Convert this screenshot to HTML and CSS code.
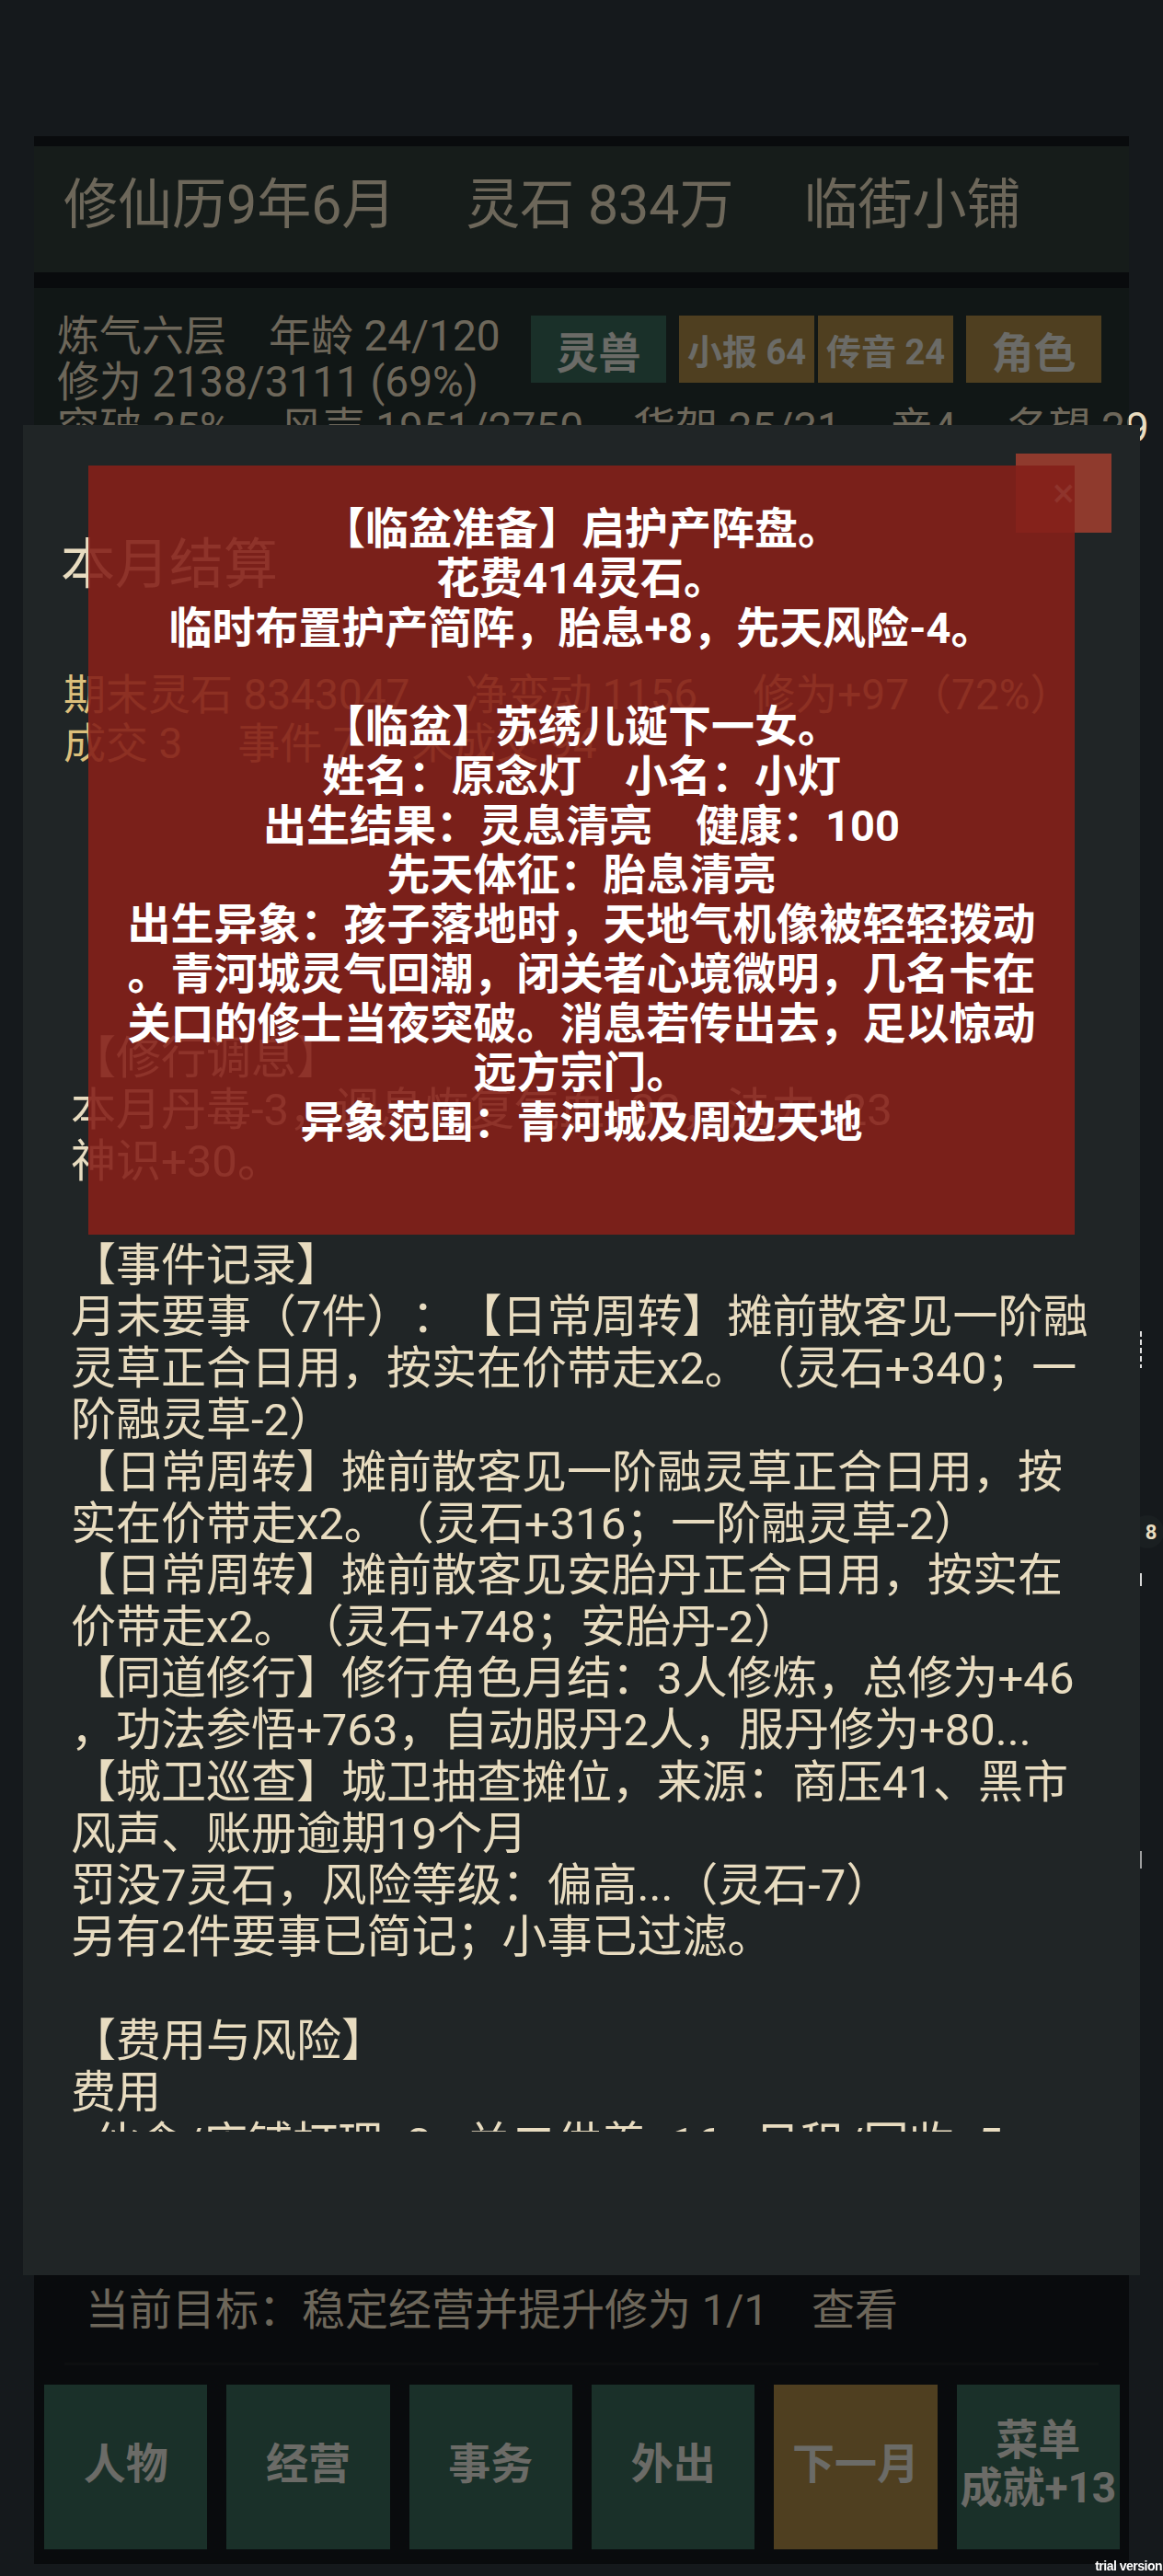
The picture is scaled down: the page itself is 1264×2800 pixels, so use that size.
FILE: index.html
```html
<!DOCTYPE html>
<html lang="zh-CN">
<head>
  <meta charset="UTF-8" />
  <meta name="viewport" content="width=device-width, initial-scale=1.0" />
  <title>修仙小铺 · 本月结算</title>
  <link rel="stylesheet" href="styles.css">
</head>
<body>
  <div class="app">
    <!-- Top bar -->
    <header class="topbar">
      <span>修仙历9年6月</span>
      <span>灵石 834万</span>
      <span>临街小铺</span>
    </header>

    <!-- Character status -->
    <section class="status">
      <div class="status-row">
        <div class="status-main">
          <div>炼气六层　年龄 24/120</div>
          <div>修为 2138/3111 (69%)</div>
        </div>
        <div class="status-btns">
          <button class="btn green">灵兽</button>
          <div class="btn-pair">
            <button class="btn gold small">小报 64</button>
            <button class="btn gold small">传音 24</button>
          </div>
          <button class="btn gold">角色</button>
        </div>
      </div>
      <div class="status-line">
        <span>突破 35%</span><span>风声 1951/2750</span><span>货架 25/31</span><span>亲4</span><span>名望 29</span>
      </div>
    </section>

    <div class="goal">
      <div class="goal-inner">当前目标：稳定经营并提升修为 1/1　查看</div>
    </div>

    <nav class="tabs">
      <button class="tab">人物</button>
      <button class="tab">经营</button>
      <button class="tab">事务</button>
      <button class="tab">外出</button>
      <button class="tab gold">下一月</button>
      <button class="tab">菜单<br>成就+13</button>
    </nav>

    <span class="side-badge">8</span>
    <div class="rail"><i class="r1"></i><i class="r2"></i><i class="r3"></i></div>
    <div class="backdrop"></div>

    <!-- Monthly report dialog -->
    <div class="modal">
      <button class="modal-close" aria-label="关闭">×</button>
      <h2 class="modal-title">本月结算</h2>
      <div class="modal-body">
        <div class="summary">
          <p><span>期末灵石 8343047</span><span>净变动 1156</span><span>修为+97（72%）</span></p>
          <p><span>成交 3</span><span>事件 7</span><span>未成交 94</span></p>
        </div>
        <div class="log">
          <p>【修行调息】</p>
          <p>本月丹毒-3，调息恢复气血+32，法力+23</p>
          <p>神识+30。</p>
          <p>　</p>
          <p>【事件记录】</p>
          <p>月末要事（7件）：【日常周转】摊前散客见一阶融</p>
          <p>灵草正合日用，按实在价带走x2。（灵石+340；一</p>
          <p>阶融灵草-2）</p>
          <p>【日常周转】摊前散客见一阶融灵草正合日用，按</p>
          <p>实在价带走x2。（灵石+316；一阶融灵草-2）</p>
          <p>【日常周转】摊前散客见安胎丹正合日用，按实在</p>
          <p>价带走x2。（灵石+748；安胎丹-2）</p>
          <p>【同道修行】修行角色月结：3人修炼，总修为+46</p>
          <p>，功法参悟+763，自动服丹2人，服丹修为+80...</p>
          <p>【城卫巡查】城卫抽查摊位，来源：商压41、黑市</p>
          <p>风声、账册逾期19个月</p>
          <p>罚没7灵石，风险等级：偏高...（灵石-7）</p>
          <p>另有2件要事已简记；小事已过滤。</p>
          <p>　</p>
          <p>【费用与风险】</p>
          <p>费用</p>
          <p>· 伙食/店铺打理 -3 · 关二供养 -16 · 日租/回收 -5</p>
        </div>
      </div>

      <!-- Birth event toast -->
      <div class="toast">
        <p>【临盆准备】启护产阵盘。</p>
        <p>花费414灵石。</p>
        <p>临时布置护产简阵，胎息+8，先天风险-4。</p>
        <p>　</p>
        <p>【临盆】苏绣儿诞下一女。</p>
        <p>姓名：原念灯　小名：小灯</p>
        <p>出生结果：灵息清亮　健康：100</p>
        <p>先天体征：胎息清亮</p>
        <p>出生异象：孩子落地时，天地气机像被轻轻拨动</p>
        <p>。青河城灵气回潮，闭关者心境微明，几名卡在</p>
        <p>关口的修士当夜突破。消息若传出去，足以惊动</p>
        <p>远方宗门。</p>
        <p>异象范围：青河城及周边天地</p>
      </div>
    </div>
  </div>

  <div class="watermark">trial version</div>
</body>
</html>
```

FILE: styles.css
```css
:root{
  --bg:#15191c;
  --cream:#e8dcc0;
  --gold-text:#dcbf7b;
  --btn-green:#396657;
  --btn-gold:#a88644;
}
*{box-sizing:border-box;margin:0;padding:0}
html,body{overflow-x:hidden}
body{
  background:var(--bg);
  color:var(--cream);
  font-family:Roboto,"Noto Sans CJK SC",sans-serif;
  text-spacing-trim:space-all;
  padding:148px 0 0 37px;
  min-height:2800px;
}
button{font-family:inherit;border:none;color:inherit}

/* ── App frame ─────────────────────────────── */
.app{
  position:relative;
  width:1190px;
  height:2639px;
  padding-top:11px;
  display:flex;
  flex-direction:column;
}

.topbar{
  height:137px;
  flex-shrink:0;
  background:#2f3c39;
  display:flex;
  align-items:center;
  gap:76px;
  padding:0 0 11px 32px;
  font-size:59px;
  line-height:1;
  white-space:nowrap;
}

/* ── Status panel ──────────────────────────── */
.status{
  flex:1;
  margin-top:17px;
  background:#26312f;
  padding:27px 30px 0 25px;
  font-size:46px;
  line-height:50px;
}
.status-row{display:flex;justify-content:space-between;align-items:flex-start}
.status-main{white-space:nowrap}
.status-main div,.status-line{height:50px}
.status-btns{display:flex;gap:14px;margin-top:3px}
.btn-pair{display:flex;gap:4px}
.btn{
  width:147px;height:73px;
  font-size:46px;font-weight:700;
  color:#e4e3dc;
  display:flex;align-items:center;justify-content:center;
  white-space:nowrap;
}
.btn.small{font-size:38px}
.btn.green{background:var(--btn-green)}
.btn.gold{background:var(--btn-gold)}
.status-line{display:flex;gap:54px;white-space:nowrap}

/* ── Goal + tabs ───────────────────────────── */
.goal{height:120px;flex-shrink:0}
.goal-inner{
  height:116px;
  margin:0 33px;
  padding:31px 0 0 23px;
  font-size:47px;
  line-height:50px;
  white-space:nowrap;
  border-bottom:3px solid #1c2022;
}
.tabs{
  height:212px;
  flex-shrink:0;
  display:grid;
  grid-template-columns:repeat(6,1fr);
  gap:21px;
  padding:17px 10px 16px 11px;
}
.tab{
  background:var(--btn-green);
  color:#e4e3dc;
  font-size:46px;font-weight:700;
  line-height:52px;
  padding-bottom:8px;
}
.tab.gold{background:var(--btn-gold)}

.side-badge{
  position:absolute;
  left:1192px;top:1499px;
  width:36px;height:36px;
  border-radius:50%;
  background:#1a1f21;
  color:var(--cream);
  font-size:22px;font-weight:700;
  display:flex;align-items:center;justify-content:center;
  padding-left:8px;
}
.rail i{position:absolute;left:1202px;width:2px;background:#d8d8d8}
.rail .r1{top:1299px;height:40px;background:repeating-linear-gradient(#e0e0e0 0 6px,transparent 6px 9px)}
.rail .r2{top:1562px;height:14px}
.rail .r3{top:1864px;height:19px;opacity:.7}
.backdrop{position:absolute;inset:0;background:rgba(0,0,0,.53)}

/* ── Dialog ────────────────────────────────── */
.modal{
  position:absolute;
  top:314px;bottom:314px;left:-12px;right:-12px;
  background:#202526;
  padding:117px 40px 0 44px;
}
.modal-close{
  position:absolute;top:31px;right:31px;
  width:104px;height:86px;
  background:#8f3a2d;
  color:#f2e4d4;
  font-size:44px;
}
.modal-title{font-size:59px;font-weight:400;line-height:70px;height:70px;margin-left:-3px}
.modal-body{height:1668px;overflow:hidden}
.summary{
  margin-top:80px;
  color:var(--gold-text);
  font-size:46px;
  line-height:53px;
  white-space:nowrap;
}
.summary p{height:53px}
.summary span{margin-right:60px}
.log{
  margin-top:288px;
  padding-left:8px;
  font-size:49px;
  line-height:56.2px;
  white-space:nowrap;
}
.log p{height:56.2px}

.toast{
  position:absolute;
  top:44px;left:71px;
  width:1072px;height:836px;
  background:rgba(132,32,26,.9);
  color:#fff;
  font-size:47px;font-weight:700;
  line-height:53.75px;
  text-align:center;
  white-space:nowrap;
  padding-top:42px;
}
.toast p{height:53.75px}

.watermark{
  position:fixed;right:1px;bottom:3px;
  color:#fff;
  font:700 14px "Liberation Sans Narrow","Liberation Sans",sans-serif;
  letter-spacing:-.5px;
}
```
